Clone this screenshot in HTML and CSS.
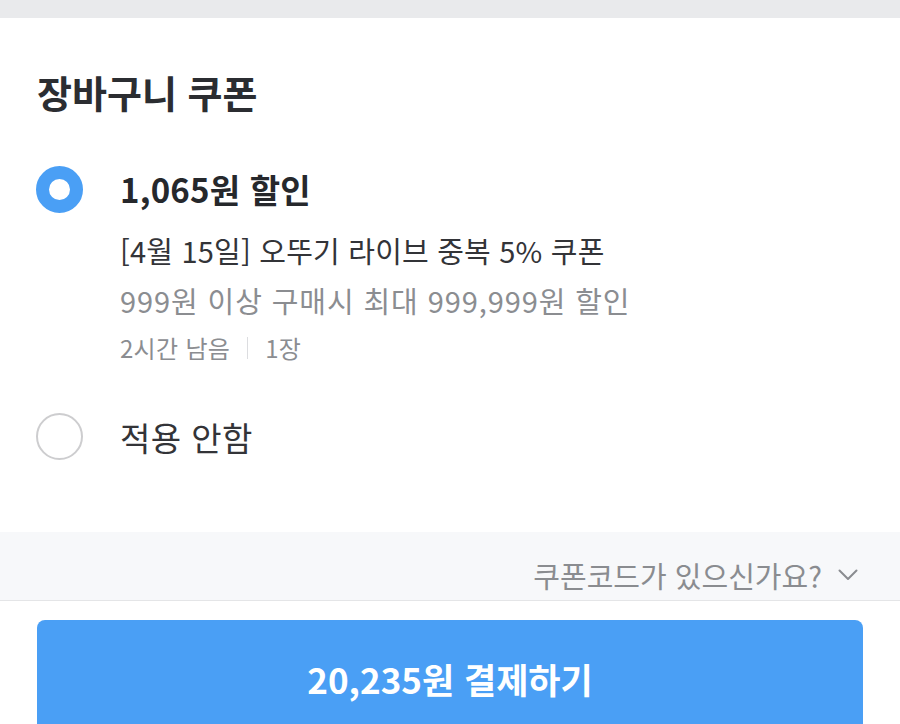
FILE: index.html
```html
<!DOCTYPE html>
<html lang="ko">
<head>
<meta charset="utf-8">
<link rel="stylesheet" href="styles.css">
</head>
<body>
<div class="topband"></div>
<section class="coupons">
  <h1 class="title">장바구니 쿠폰</h1>
  <div class="option">
    <span class="radio radio-on"></span>
    <div class="info">
      <div class="amount">1,065원 할인</div>
      <div class="name">[4월 15일] 오뚜기 라이브 중복 5% 쿠폰</div>
      <div class="cond">999원 이상 구매시 최대 999,999원 할인</div>
      <div class="meta"><span>2시간 남음</span><span class="sep"></span><span>1장</span></div>
    </div>
  </div>
  <div class="option option-none">
    <span class="radio"></span>
    <div class="none-label">적용 안함</div>
  </div>
</section>
<div class="code-row">
  <span class="code-text">쿠폰코드가 있으신가요?</span>
  <svg class="chev" width="20" height="12" viewBox="0 0 20 12"><path d="M1.5 1.5 L10 10 L18.5 1.5" fill="none" stroke="#8a8c90" stroke-width="2" stroke-linecap="round" stroke-linejoin="round"/></svg>
</div>
<div class="pay">
  <button class="pay-btn">20,235원 결제하기</button>
</div>
</body>
</html>
```
FILE: styles.css
```css
html, body {
  margin: 0;
  padding: 0;
  background: #fff;
  font-family: "Noto Sans CJK KR", "Noto Sans", sans-serif;
  width: 900px;
  height: 724px;
  overflow: hidden;
}
.topband {
  height: 18px;
  background: #e9eaec;
}
.coupons {
  padding: 48px 37px 0 36px;
  height: 514px;
  box-sizing: border-box;
}
.title {
  margin: 0 0 0 1px;
  font-size: 38px;
  font-weight: 700;
  color: #2b2d31;
  line-height: 52px;
}
.option {
  display: flex;
  align-items: flex-start;
  margin-top: 48px;
}
.radio {
  width: 47px;
  height: 47px;
  box-sizing: border-box;
  border-radius: 50%;
  border: 2px solid #cdcdcf;
  flex: none;
  background: #fff;
}
.radio-on {
  border: 13.5px solid #4a9ff5;
}
.info {
  margin-left: 37px;
}
.amount {
  font-size: 33px;
  font-weight: 700;
  color: #26282c;
  line-height: 46px;
  letter-spacing: 0.2px;
}
.name {
  margin-top: 18px;
  font-size: 29px;
  color: #333438;
  line-height: 40px;
  letter-spacing: 0.2px;
}
.cond {
  margin-top: 10px;
  font-size: 29px;
  color: #8b8d91;
  line-height: 40px;
  letter-spacing: 0.9px;
}
.meta {
  margin-top: 10px;
  font-size: 24px;
  color: #8b8d91;
  line-height: 36px;
  display: flex;
  align-items: center;
  letter-spacing: 0.3px;
}
.sep {
  width: 1px;
  height: 22px;
  background: #dcdde0;
  margin: 0 17px;
}
.option-none {
  margin-top: 47px;
  align-items: center;
}
.none-label {
  margin-left: 37px;
  font-size: 33px;
  color: #333438;
  line-height: 46px;
  letter-spacing: 0.4px;
}
.code-row {
  height: 69px;
  background: #f7f8fa;
  border-bottom: 1px solid #e4e5e7;
  display: flex;
  align-items: center;
  justify-content: flex-end;
  padding: 18px 42px 0 0;
  box-sizing: border-box;
}
.code-text {
  font-size: 29px;
  color: #8a8c90;
  line-height: 40px;
}
.chev {
  margin-left: 16px;
}
.pay {
  padding: 19px 37px 0 37px;
}
.pay-btn {
  display: block;
  width: 100%;
  height: 116px;
  border: none;
  border-radius: 8px;
  background: #4a9ff5;
  color: #fff;
  font-family: "Noto Sans CJK KR", "Noto Sans", sans-serif;
  font-size: 35px;
  font-weight: 700;
  padding: 0;
}
```
